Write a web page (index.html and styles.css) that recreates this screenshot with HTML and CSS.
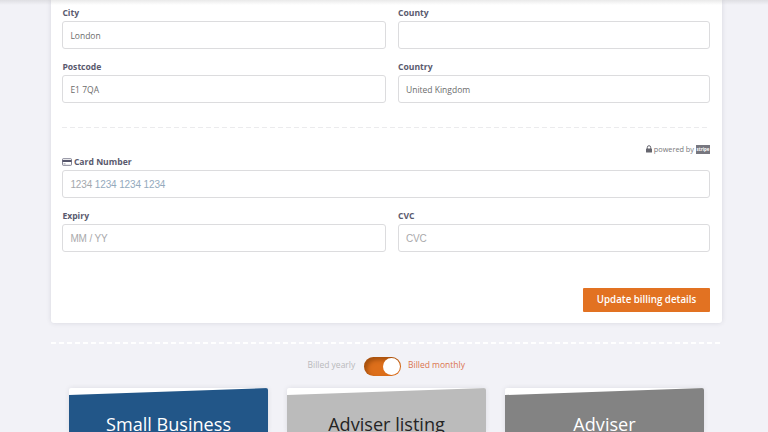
FILE: index.html
```html
<!DOCTYPE html>
<html lang="en">
<head>
<meta charset="utf-8">
<title>Billing details</title>
<link rel="stylesheet" href="styles.css">
</head>
<body>
<main class="page">
  <form class="panel">
    <div class="row">
      <div class="field"><label class="label">City</label><div class="input">London</div></div>
      <div class="field"><label class="label">County</label><div class="input"></div></div>
    </div>
    <div class="row">
      <div class="field"><label class="label">Postcode</label><div class="input">E1 7QA</div></div>
      <div class="field"><label class="label">Country</label><div class="input">United Kingdom</div></div>
    </div>
    <div class="divider"></div>
    <div class="powered">
      <svg class="lock" viewBox="0 0 6 8"><path d="M1.3 4V2.4a1.7 1.7 0 0 1 3.4 0V4" fill="none" stroke="#66666f" stroke-width="1"/><rect y="3.5" width="6" height="4" rx=".5" fill="#66666f"/></svg>
      <span>powered by</span>
      <span class="stripe">stripe</span>
    </div>
    <div class="field card-field">
      <label class="label">
        <svg class="card-icon" viewBox="0 0 10 8"><rect x=".5" y=".7" width="9" height="6.6" rx=".7" fill="#fff" stroke="#66667a" stroke-width=".8"/><rect x=".5" y="2" width="9" height="2" fill="#55556a"/><path d="M1.5 5.8h2" stroke="#77778a" stroke-width=".7"/></svg>
        Card Number</label>
      <div class="input hint number"><span class="muted">1234</span> 1234 1234 1234</div>
    </div>
    <div class="row">
      <div class="field"><label class="label">Expiry</label><div class="input hint">MM / YY</div></div>
      <div class="field"><label class="label">CVC</label><div class="input hint">CVC</div></div>
    </div>
    <div class="actions"><button class="submit" type="button">Update billing details</button></div>
  </form>
  <div class="divider divider-light"></div>
  <div class="billing">
    <span class="yearly">Billed yearly</span>
    <span class="switch"><span class="knob"></span></span>
    <span class="monthly">Billed monthly</span>
  </div>
  <section class="plans">
    <article class="plan"><h2 class="plan-title blue">Small Business</h2></article>
    <article class="plan"><h2 class="plan-title silver">Adviser listing</h2></article>
    <article class="plan"><h2 class="plan-title grey">Adviser</h2></article>
  </section>
</main>
<div class="top-shade"></div>
</body>
</html>
```
FILE: styles.css
```css
* { box-sizing: border-box; }
html, body { height: 100%; }
body {
  margin: 0;
  overflow: hidden;
  background: #f2f2f7;
  color: #666;
  font-family: "Open Sans", "Liberation Sans", sans-serif;
  font-size: 8.5px;
}
.page { width: 671px; margin-left: 51px; }
.panel {
  height: 323px;
  padding: 6px 12px 0 11.4px;
  background: #fff;
  border-radius: 0 0 3px 3px;
  box-shadow: 0 0 5px rgba(40, 40, 60, .13);
}
.row {
  display: grid;
  grid-template-columns: 324px 312px;
  column-gap: 11.6px;
}
.field { height: 54px; }
.label {
  display: flex;
  align-items: center;
  gap: 1.5px;
  height: 13px;
  margin-bottom: 2px;
  color: #5a5a6e;
  font-size: 8.6px;
  font-weight: 700;
}
.input {
  display: flex;
  align-items: center;
  height: 28px;
  padding: 0 7px;
  border: 1px solid #dcdcde;
  border-radius: 3px;
  background: #fff;
  color: #6c6c6c;
}
.hint {
  color: #a9a9ab;
  font-family: "Liberation Sans", Arial, sans-serif;
  font-size: 10px;
  letter-spacing: -.13px;
}
.number { color: #94aabd; white-space: pre; }
.muted { color: #a4a8ac; }
.divider {
  height: 1px;
  margin-top: 13px;
  background: repeating-linear-gradient(90deg, #ebebed 0 5px, #fff 5px 8px);
}
.powered {
  display: flex;
  justify-content: flex-end;
  align-items: center;
  gap: 2px;
  height: 10px;
  margin-top: 16px;
  color: #77777b;
  font-size: 7.3px;
}
.lock { width: 6px; height: 8px; }
.stripe {
  width: 14px;
  height: 9px;
  background: #77777f;
  color: #fff;
  font-size: 4.4px;
  font-weight: 700;
  line-height: 8px;
  text-align: center;
}
.card-icon { width: 10px; height: 8px; }
.card-field { margin-top: 1px; }
.actions {
  display: flex;
  justify-content: flex-end;
  margin-top: 25px;
}
.submit {
  width: 127px;
  height: 24px;
  padding: 0;
  border: 0;
  border-radius: 1px;
  background: #e27222;
  color: #fff;
  font: 600 9.75px/24px "Open Sans", sans-serif;
}
.divider-light {
  height: 2px;
  margin-top: 19px;
  background: repeating-linear-gradient(90deg, #fff 0 5px, #f2f2f7 5px 8px);
}
.billing {
  display: flex;
  align-items: center;
  height: 20px;
  margin: 12px 0 0 256.5px;
}
.yearly,
.monthly { height: 14px; line-height: 12px; white-space: nowrap; }
.yearly { width: 56px; color: #b9b9bb; }
.monthly { color: #db7550; }
.switch {
  display: flex;
  justify-content: flex-end;
  align-items: center;
  width: 37px;
  height: 19px;
  margin-right: 7.5px;
  padding-right: 1px;
  border-radius: 10px;
  background: #dd6f1b;
  box-shadow: inset 3px 3px 4px rgba(110, 50, 0, .5);
}
.knob { width: 17px; height: 17px; border-radius: 50%; background: #fff; }
.plans {
  display: grid;
  grid-template-columns: repeat(3, 199px);
  gap: 19px;
  margin: 11px 0 0 18px;
  padding-top: 1px;
}
.plan {
  height: 44px;
  overflow: hidden;
  border-radius: 2px 2px 0 0;
  background: #fff;
  box-shadow: 0 0 5px rgba(40, 40, 60, .1);
}
.plan-title {
  height: 44px;
  margin: 0;
  padding-top: 22px;
  clip-path: polygon(0 7px, 100% 0, 100% 100%, 0 100%);
  font-size: 18.1px;
  font-weight: 400;
  line-height: 28px;
  text-align: center;
}
.blue { background: #225688; color: #fff; }
.silver { background: #bbb; color: #242424; }
.grey { background: #838383; color: #fff; }
.top-shade {
  position: absolute;
  inset: 0 0 auto;
  height: 5px;
  background: linear-gradient(rgba(90, 90, 90, .13), rgba(90, 90, 90, 0));
}
```
